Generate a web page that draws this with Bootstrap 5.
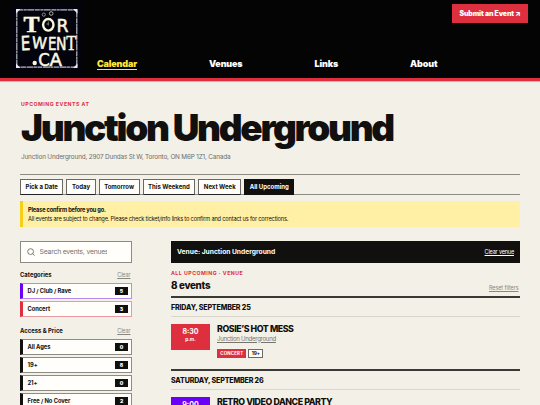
<!DOCTYPE html>
<html lang="en">
<head>
    <meta charset="UTF-8">
    <meta name="viewport" content="width=device-width, initial-scale=1">
    <title>Junction Underground events</title>
    <link href="https://cdn.jsdelivr.net/npm/bootstrap@5.3.0/dist/css/bootstrap.min.css" rel="stylesheet">
    <style>
        :root { --ink: #11100e; --red: #de2f3f; --paper: #f3f0e8; --violet: #6a00f4; --line: #8d8b84; }
        body { background: var(--paper); color: var(--ink); font-family: Inter, "Open Sans", sans-serif; font-size: 6px; line-height: 8px; height: 405px; overflow: hidden; }
        a { color: inherit; }

        /* header */
        .site-head { height: 81px; background: #040404; border-bottom: 3px solid var(--red); box-shadow: 0 1px #eda8a8; padding: 4px 12px 0; }
        .site-logo { width: 69px; height: 69px; display: block; }
        .site-nav { gap: 72px; margin-left: 16px; padding-bottom: 8.5px; font-size: 9px; font-weight: 900; letter-spacing: -.15px; line-height: 11px; color: #fff; }
        .site-nav a { text-decoration: none; border-bottom: 1px solid transparent; }
        .site-nav a.active { color: #ffe83a; border-color: #ffe83a; }
        .btn-submit { background: var(--red); color: #fff; width: 76px; height: 19px; border-radius: 0; padding: 0; font-size: 6.9px; font-weight: 900; line-height: 18px; letter-spacing: -.1px; }

        /* venue title */
        .page { padding: 0 20px; }
        .kicker { color: var(--red); font-size: 5.2px; font-weight: 700; letter-spacing: .5px; line-height: 7px; }
        .venue-title { font-size: 37px; font-weight: 900; letter-spacing: -2.33px; line-height: 40px; margin: 0 0 0 1px; white-space: nowrap; }
        .address { color: #706d66; font-size: 6.4px; letter-spacing: -.17px; }

        .date-tabs { border-top: 1px solid var(--line); border-bottom: 1px solid var(--line); margin-top: 13px; padding-top: 4px; height: 21px; gap: 3px; }
        .date-tabs a { height: 16px; border: 1px solid #6b6963; border-bottom-color: #222; background: #fffefa; font-weight: 700; line-height: 14px; padding: 0 4.55px; text-decoration: none; }
        .date-tabs a.active { background: var(--ink); border-color: var(--ink); color: #fff; }
        .notice { background: #fff0a6; border-left: 3px solid #f7cf17; height: 26px; margin-top: 6px; padding: 4.5px 5px 0; font-size: 5.7px; line-height: 9px; letter-spacing: -.19px; }

        /* filters */
        .layout { gap: 39px; margin-top: 14.5px; }
        .filters { width: 112px; flex: none; }
        .search-box { height: 22px; border: 1px solid var(--line); background: #fffefa; padding: 0 24px 0 6px; gap: 4.5px; font-size: 6.8px; letter-spacing: -.18px; color: #74716b; }
        .filter-head { font-size: 5.9px; font-weight: 700; height: 8px; padding-right: 1.5px; }
        .clear-link { font-size: 5.5px; font-weight: 400; letter-spacing: -.1px; color: #8a8780; }
        .filter-item { --tone: var(--ink); --edge: #8d8b84; height: 16px; margin-bottom: 2.2px; border: 1px solid var(--edge); border-left: 3px solid var(--tone); background: #fffefa; padding: 0 3px 0 4.5px; font-size: 5.8px; font-weight: 700; letter-spacing: -.06px; }
        .filter-item b { width: 13px; height: 8px; background: var(--ink); color: #fff; font-size: 5px; line-height: 8px; text-align: center; }

        /* listing */
        .venue-bar { height: 21.5px; background: var(--ink); color: #fff; padding: 0 6px; font-size: 6.7px; font-weight: 700; }
        .venue-bar a { font-size: 5.5px; font-weight: 400; letter-spacing: -.16px; }
        .event-count { font-size: 9.8px; font-weight: 800; letter-spacing: -.3px; line-height: 12px; margin: 0; }
        .day-head { border-top: 2px solid #3b3936; border-bottom: 1px solid #d9d6cd; height: 20.5px; line-height: 19px; font-size: 7.1px; font-weight: 800; letter-spacing: -.17px; margin: 0; }
        .event-row { gap: 7px; padding-top: 7px; height: 52.5px; }
        .time-box { width: 39px; height: 26px; background: var(--red); color: #fff; font-size: 7px; font-weight: 700; text-align: center; line-height: 8px; padding-top: 4px; }
        .time-box span { display: block; font-size: 4.8px; line-height: 7px; }
        .event-name { font-size: 8.8px; font-weight: 800; letter-spacing: -.42px; line-height: 9px; margin: 0; }
        .event-venue { color: #77746d; font-size: 6.1px; letter-spacing: -.29px; line-height: 8px; margin-top: 2px; }
        .tag-chip { height: 9px; background: var(--red); border: 1px solid var(--red); color: #fff; font-size: 4.4px; font-weight: 700; line-height: 7px; padding: 0 2.2px; letter-spacing: .2px; }
        .tag-chip.age { background: #fffefa; border-color: #6b6963; color: var(--ink); font-size: 4.8px; letter-spacing: -.1px; }
    </style>
</head>
<body>
    <header class="site-head d-flex">
        <svg class="site-logo" viewBox="12 4 69 69">
            <rect x="12" y="4" width="69" height="69" fill="#03030d"/>
            <rect x="16.800" y="9.800" width="60" height="57.400" rx="1.500" fill="none" stroke="#b9bcc8" stroke-width="1.200" stroke-dasharray="5 .5 3 .4 7 .6"/>
            <path d="M16 9h4.500l-4.500 4.500zM77.500 9h-4.500l4.500 4.500zM16 68v-4.500l4.500 4.500zM77.500 68v-4.500l-4.500 4.500z" fill="#e9eaf0"/>
            <g fill="#fbf8e0" stroke="#fbf8e0" stroke-width=".5">
                <text x="23.500" y="31.500" font-family="Liberation Serif, serif" font-size="23" font-weight="700" textLength="16" lengthAdjust="spacingAndGlyphs">T</text>
                <text x="56.500" y="31.500" font-family="DejaVu Sans, sans-serif" font-size="18.500" textLength="12" lengthAdjust="spacingAndGlyphs">R</text>
            </g>
            <!-- the O with two eyes over it -->
            <ellipse cx="48.300" cy="24.800" rx="5.200" ry="5.800" fill="none" stroke="#fbf8e0" stroke-width="2.400"/>
            <path d="M48.300 21.500v4M46.500 24h2" stroke="#aaa99e" stroke-width=".7" fill="none"/>
            <circle cx="43.800" cy="14.600" r="1.600" fill="none" stroke="#a5a499" stroke-width=".8"/>
            <circle cx="51.200" cy="13.500" r="1.800" fill="none" stroke="#c5c3b5" stroke-width=".9"/>
            <g fill="#fbf8e0" stroke="#fbf8e0" stroke-width=".5" font-family="DejaVu Sans, sans-serif" font-size="19.500">
                <text x="20.800" y="50" textLength="9.500" lengthAdjust="spacingAndGlyphs" transform="rotate(-2 26 42)">E</text>
                <text x="32" y="48.500" font-size="16" textLength="15" lengthAdjust="spacingAndGlyphs" transform="rotate(4 39 42)">W</text>
                <text x="48" y="49.500" font-size="18" textLength="8.500" lengthAdjust="spacingAndGlyphs">E</text>
                <text x="56" y="49.500" font-size="17" textLength="10.500" lengthAdjust="spacingAndGlyphs">N</text>
                <text x="66.300" y="49.500" font-size="20.500" font-family="Liberation Serif, serif" textLength="10" lengthAdjust="spacingAndGlyphs">T</text>
                <text x="38.300" y="66" font-size="17.500" textLength="11.500" lengthAdjust="spacingAndGlyphs">C</text>
                <text x="49.500" y="66" font-size="17.500" textLength="12.500" lengthAdjust="spacingAndGlyphs">A</text>
            </g>
            <circle cx="34.700" cy="63" r="2.200" fill="#fbf8e0"/>
        </svg>
        <nav class="site-nav d-flex align-self-end">
            <a class="active" href="#">Calendar</a>
            <a href="#">Venues</a>
            <a href="#">Links</a>
            <a href="#">About</a>
        </nav>
        <a class="btn btn-submit ms-auto" href="#">Submit an Event ↗</a>
    </header>

    <main class="page">
        <div class="kicker" style="padding:19.5px 0 0 1px">UPCOMING EVENTS AT</div>
        <h1 class="venue-title">Junction Underground</h1>
        <div class="address" style="padding:5px 0 0 1px">Junction Underground, 2907 Dundas St W, Toronto, ON M6P 1Z1, Canada</div>

        <nav class="date-tabs d-flex">
            <a href="#">Pick a Date</a>
            <a href="#">Today</a>
            <a href="#">Tomorrow</a>
            <a href="#">This Weekend</a>
            <a href="#">Next Week</a>
            <a class="active" href="#">All Upcoming</a>
        </nav>

        <div class="notice">
            <div class="fw-bold">Please confirm before you go.</div>
            <div>All events are subject to change. Please check ticket/info links to confirm and contact us for corrections.</div>
        </div>

        <div class="layout d-flex">
            <aside class="filters">
                <div class="search-box d-flex align-items-center">
                    <svg class="flex-shrink-0" width="8" height="8" viewBox="0 0 8 8" fill="none" stroke="#55534e" stroke-width=".75"><circle cx="3.600" cy="3.600" r="2.900"/><path d="M5.700 5.700l1.900 1.900"/></svg>
                    <span class="overflow-hidden text-nowrap">Search events, venues</span>
                </div>
                <div class="filter-head d-flex justify-content-between" style="margin:7.500px 0 4px">
                    <span>Categories</span><a class="clear-link" href="#">Clear</a>
                </div>
                <div class="filter-item d-flex align-items-center justify-content-between" style="--tone:#6a00f4;--edge:#b98af2"><span>DJ / Club / Rave</span><b>5</b></div>
                <div class="filter-item d-flex align-items-center justify-content-between" style="--tone:#de2f3f;--edge:#e99a9f"><span>Concert</span><b>3</b></div>
                <div class="filter-head d-flex justify-content-between" style="margin:10px 0 4px">
                    <span>Access &amp; Price</span><a class="clear-link" href="#">Clear</a>
                </div>
                <div class="filter-item d-flex align-items-center justify-content-between"><span>All Ages</span><b>0</b></div>
                <div class="filter-item d-flex align-items-center justify-content-between"><span>19+</span><b>8</b></div>
                <div class="filter-item d-flex align-items-center justify-content-between"><span>21+</span><b>0</b></div>
                <div class="filter-item d-flex align-items-center justify-content-between"><span>Free / No Cover</span><b>2</b></div>
            </aside>

            <section class="flex-grow-1">
                <div class="venue-bar d-flex align-items-center justify-content-between">
                    <span>Venue: Junction Underground</span><a href="#">Clear venue</a>
                </div>
                <div class="kicker" style="margin-top:7px">ALL UPCOMING · VENUE</div>
                <div class="d-flex justify-content-between align-items-end" style="height:19.500px;padding:0 1.500px 4px 0">
                    <h2 class="event-count">8 events</h2><a class="clear-link" href="#">Reset filters</a>
                </div>

                <h3 class="day-head">FRIDAY, SEPTEMBER 25</h3>
                <article class="event-row d-flex">
                    <div class="time-box">8:30<span>p.m.</span></div>
                    <div>
                        <h4 class="event-name">ROSIE’S HOT MESS</h4>
                        <a class="event-venue d-block" href="#">Junction Underground</a>
                        <div class="d-flex" style="gap:2px;margin-top:6.500px">
                            <span class="tag-chip">CONCERT</span><span class="tag-chip age">19+</span>
                        </div>
                    </div>
                </article>

                <h3 class="day-head">SATURDAY, SEPTEMBER 26</h3>
                <article class="event-row d-flex">
                    <div class="time-box" style="background:var(--violet)">9:00<span>p.m.</span></div>
                    <div>
                        <h4 class="event-name">RETRO VIDEO DANCE PARTY</h4>
                    </div>
                </article>
            </section>
        </div>
    </main>
    <script src="https://cdn.jsdelivr.net/npm/bootstrap@5.3.0/dist/js/bootstrap.bundle.min.js"></script>
</body>
</html>
